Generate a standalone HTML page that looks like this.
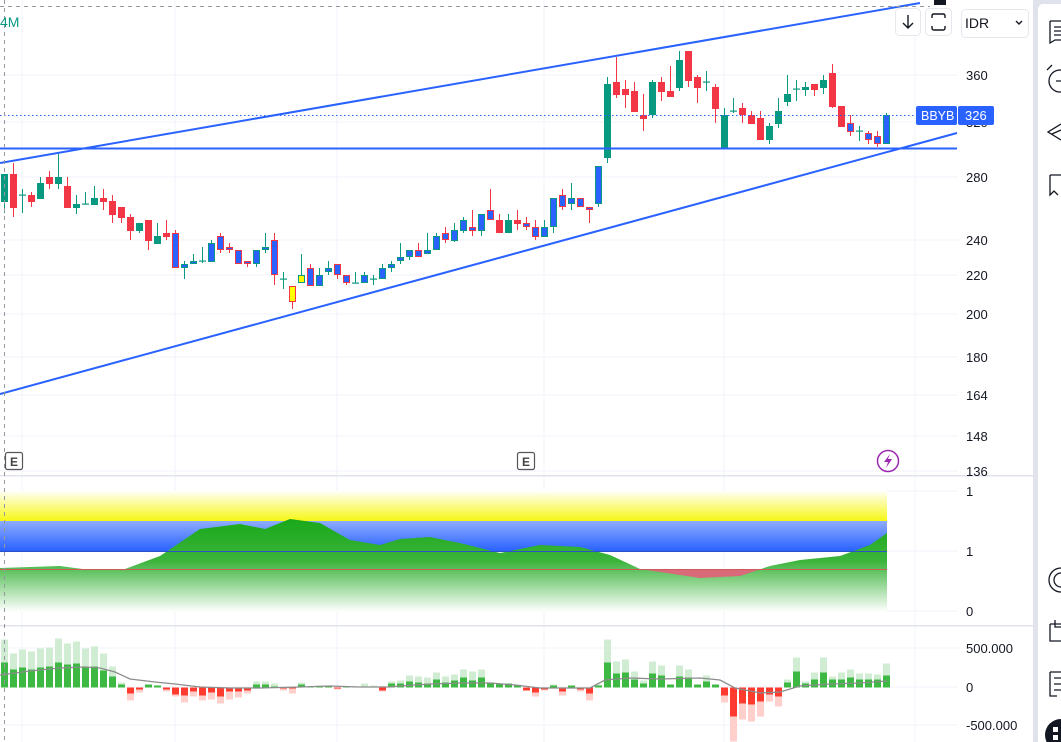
<!DOCTYPE html>
<html><head><meta charset="utf-8"><style>
html,body{margin:0;padding:0;width:1061px;height:742px;overflow:hidden;background:#fff;font-family:"Liberation Sans",sans-serif}
svg{position:absolute;left:0;top:0}
.t{font-size:13px;fill:#131722;font-family:"Liberation Sans",sans-serif}
</style></head><body>
<svg id="s" width="1061" height="742" viewBox="0 0 1061 742" xmlns="http://www.w3.org/2000/svg">
<defs>
<linearGradient id="yl" x1="0" y1="490" x2="0" y2="521" gradientUnits="userSpaceOnUse"><stop offset="0" stop-color="#fff"/><stop offset="1" stop-color="#f7f714"/></linearGradient>
<linearGradient id="bl" x1="0" y1="521" x2="0" y2="551" gradientUnits="userSpaceOnUse"><stop offset="0" stop-color="#8eacff"/><stop offset="1" stop-color="#2962ff"/></linearGradient>
<linearGradient id="gr" x1="0" y1="520" x2="0" y2="612" gradientUnits="userSpaceOnUse"><stop offset="0" stop-color="#1aa81a"/><stop offset="0.45" stop-color="#3cb43c"/><stop offset="1" stop-color="#fff"/></linearGradient>
</defs>
<g id="grid" stroke="#f0f3fa" stroke-width="1"></g>
<g id="c"></g>
</svg>
<script>
var s='';
// grid
[75,122,177,240,275,314,357,395,436,471].forEach(function(y){s+='<line x1="0" x2="958" y1="'+y+'" y2="'+y+'" stroke="#f0f3fa"/>';});
[491,551,611,648,687,725].forEach(function(y){s+='<line x1="0" x2="958" y1="'+y+'" y2="'+y+'" stroke="#f0f3fa"/>';});
[22,175,337,544,724,915].forEach(function(x){s+='<line x1="'+x+'" x2="'+x+'" y1="0" y2="742" stroke="#f0f3fa"/>';});
// panes separators
s+='<rect x="0" y="475" width="1033" height="1.5" fill="#e0e3eb"/><rect x="0" y="625" width="1033" height="1.5" fill="#e0e3eb"/>';
// indicator
s+='<rect x="0" y="490" width="887" height="31" fill="url(#yl)"/><rect x="0" y="521" width="887" height="30" fill="url(#bl)"/>';
s+='<rect x="640" y="569" width="125" height="12" fill="#d96a7a"/>';
var gp=[[0,568],[60,566],[90,570],[125,569],[160,556],[200,529],[240,524],[265,529],[290,519],[320,523],[350,540],[380,545],[400,539],[430,537],[460,543],[500,553],[540,545],[580,547],[610,555],[640,569],[700,578],[740,576],[770,566],[800,560],[840,556],[870,545],[887,533]];
s+='<polygon fill="url(#gr)" points="'+gp.map(function(p){return p.join(',')}).join(' ')+' 887,612 0,612"/>';
s+='<line x1="0" x2="887" y1="551.5" y2="551.5" stroke="#2e50c8" stroke-width="1"/><line x1="0" x2="887" y1="569.5" y2="569.5" stroke="#d05a5a" stroke-width="1"/>';
// volume
var V=[[48,25],[34,18],[38,20],[36,18],[39,20],[40,21],[49,25],[44,23],[46,24],[39,20],[41,21],[34,17],[21,11],[5,3],[-13,-6],[-5,-2],[3,3],[2,2],[-4,-2],[-9,-7],[-15,-8],[-9,-4],[-13,-8],[-12,-5],[-16,-9],[-12,-4],[-10,-4],[-6,-3],[6,3],[6,3],[4,1],[-3,-1],[-6,-1],[5,3],[1,1],[2,1],[1,1],[-2,-1],[1,1],[1,1],[4,1],[2,1],[-4,-3],[6,4],[7,4],[12,6],[11,5],[10,4],[15,8],[11,5],[13,7],[18,10],[16,7],[18,10],[5,5],[4,4],[4,4],[3,2],[-3,-3],[-9,-5],[-3,-2],[3,2],[-8,-4],[2,2],[-4,-2],[-13,-6],[3,2],[48,25],[26,14],[28,15],[16,8],[7,4],[26,14],[22,12],[3,3],[22,11],[18,10],[3,3],[12,6],[3,3],[-15,-8],[-54,-29],[-32,-16],[-34,-17],[-29,-14],[-14,-7],[-19,-9],[8,5],[30,16],[6,4],[15,8],[30,15],[11,8],[15,8],[18,10],[14,8],[14,8],[13,8],[24,12]];
V.forEach(function(v,i){var x=4.5+9*i-3.5;var z=687.5;
 if(v[0]>=0){s+='<rect x="'+x+'" y="'+(z-v[0])+'" width="7" height="'+v[0]+'" fill="#d0ecd2"/><rect x="'+x+'" y="'+(z-v[1])+'" width="7" height="'+v[1]+'" fill="#3db843"/>';}
 else{s+='<rect x="'+x+'" y="'+z+'" width="7" height="'+(-v[0])+'" fill="#ffcfcc"/><rect x="'+x+'" y="'+z+'" width="7" height="'+(-v[1])+'" fill="#ff3b2f"/>';}
});
var ma=[[0,675],[30,671],[60,668],[85,667],[100,668],[115,672],[130,679],[155,682],[175,684],[200,687],[230,688],[260,688],[300,687],[330,686],[360,687],[390,687],[400,686],[430,684],[460,683],[490,683],[515,685],[540,688],[555,688],[590,688],[605,680],[630,678],[660,679],[700,678],[720,680],[735,688],[760,693],[780,692],[800,686],[830,684],[860,683],[887,681]];
s+='<polyline fill="none" stroke="#8c8c8c" stroke-width="1.3" points="'+ma.map(function(p){return p.join(',')}).join(' ')+'"/>';
// candles
var C=[['g',174,202,174,213],['r',174,208,163,217],['g',195,195,189,213],['r',195,202,192,207],['g',183,199,177,199],['r',177,184,171,189],['g',177,184,154,189],['r',186,208,177,208],['g',204,208,195,214],['g',204,204,192,204],['g',198,205,186,205],['r',198,202,189,210],['r',201,215,195,223],['r',207,218,207,223],['r',217,231,214,240],['g',223,231,223,233],['r',220,241,220,250],['g',236,244,223,244],['r',233,237,220,240],['br',233,268,230,268],['bg',264,268,261,279],['bg',261,264,254,264],['g',261,261,247,263],['bg',243,262,240,262],['br',236,250,233,253],['br',247,250,243,253],['br',250,264,250,264],['br',261,264,261,267],['bg',250,264,250,267],['bg',247,250,233,253],['br',240,275,233,285],['g',279,279,272,289],['yr',286,302,286,309],['yg',275,283,254,283],['br',268,286,264,286],['bg',275,286,268,286],['bg',268,272,261,275],['br',264,275,264,279],['br',275,283,275,285],['g',283,283,272,283],['bg',275,283,272,283],['g',279,279,275,285],['bg',268,279,264,279],['bg',264,268,261,272],['bg',257,261,243,264],['bg',250,257,250,260],['br',250,257,243,257],['bg',250,254,233,254],['bg',236,250,233,250],['br',233,240,227,243],['bg',230,241,223,242],['bg',220,231,217,233],['br',227,231,210,236],['bg',214,231,214,236],['br',210,220,189,220],['r',220,233,214,233],['g',220,233,214,233],['r',220,224,210,230],['br',223,227,217,230],['br',227,237,220,240],['bg',227,237,220,237],['bg',198,227,198,233],['br',195,207,189,210],['bg',198,204,183,210],['br',198,207,198,207],['br',207,210,207,223],['bg',166,204,166,207],['g',84,158,77,163],['r',82,95,57,98],['r',89,95,80,108],['r',91,112,82,112],['r',115,119,94,131],['g',82,115,80,118],['r',82,92,77,101],['r',91,97,66,97],['g',60,88,51,91],['r',51,81,51,87],['r',77,88,75,103],['g',82,82,71,91],['r',87,109,84,123],['g',115,149,108,149],['g',111,111,98,113],['r',108,115,103,123],['r',115,124,111,124],['r',118,140,111,140],['g',126,140,123,144],['g',111,124,98,128],['g',94,102,75,106],['g',89,89,80,101],['g',87,90,82,96],['r',84,90,84,96],['g',80,88,75,94],['r',73,107,64,108],['r',106,127,106,127],['br',123,132,115,136],['g',131,131,126,141],['br',133,140,131,144],['br',136,144,131,147],['bg',115,144,113,144]];
var G='#089981',R='#f23645',B='#2962ff',Y='#ffff00';
C.forEach(function(c,i){var x=4.5+9*i;var t=c[0];var oc=(t=='r'||t=='br'||t=='yr')?R:G;var fc=t=='g'?G:t=='r'?R:(t[0]=='b'?B:Y);
 s+='<rect x="'+(x-0.5)+'" y="'+c[3]+'" width="1" height="'+(c[4]-c[3])+'" fill="'+oc+'"/>';
 if(c[2]-c[1]<1){s+='<rect x="'+(x-3.5)+'" y="'+(c[1]-0.5)+'" width="7" height="1.2" fill="'+oc+'"/>';}
 else if(t.length==2){s+='<rect x="'+(x-3)+'" y="'+(c[1]+0.5)+'" width="6" height="'+(c[2]-c[1]-1)+'" fill="'+fc+'" stroke="'+oc+'" stroke-width="1"/>';}
 else{s+='<rect x="'+(x-3.5)+'" y="'+c[1]+'" width="7" height="'+(c[2]-c[1])+'" fill="'+fc+'"/>';}
});
// lines
s+='<line x1="0" y1="115.5" x2="915" y2="115.5" stroke="#2962ff" stroke-width="1" stroke-dasharray="1.5,2.5"/>';
s+='<line x1="0" y1="163" x2="920" y2="3" stroke="#2962ff" stroke-width="2"/>';
s+='<line x1="0" y1="394" x2="957" y2="133" stroke="#2962ff" stroke-width="2"/>';
s+='<line x1="0" y1="148.5" x2="957" y2="148.5" stroke="#2962ff" stroke-width="2"/>';
s+='<line x1="4.5" y1="0" x2="4.5" y2="742" stroke="#9598a1" stroke-width="1" stroke-dasharray="4,4"/>';
s+='<line x1="0" y1="6.5" x2="930" y2="6.5" stroke="#9598a1" stroke-width="1" stroke-dasharray="4,4"/>';
// price axis labels
[[75,'360'],[122,'320'],[177,'280'],[240,'240'],[275,'220'],[314,'200'],[357,'180'],[395,'164'],[436,'148'],[471,'136'],[491,'1'],[551,'1'],[611,'0'],[648,'500.000'],[687,'0'],[725,'-500.000']].forEach(function(a){s+='<text class="t" x="966" y="'+(a[0]+5)+'">'+a[1]+'</text>';});
// BBYB label
s+='<rect x="916" y="106" width="41" height="19" rx="2" fill="#2962ff"/><rect x="958" y="106" width="36" height="19" rx="2" fill="#2962ff"/>';
s+='<text x="921" y="120" style="font-size:12.5px;fill:#fff;font-family:Liberation Sans">BBYB</text><text x="965" y="120" style="font-size:13px;fill:#fff;font-family:Liberation Sans">326</text>';
// E markers
[[5],[517]].forEach(function(a){s+='<rect x="'+(a[0]+0.5)+'" y="452.5" width="17" height="17" rx="2" fill="#fff" stroke="#555" stroke-width="1.2"/><text x="'+(a[0]+5)+'" y="466" style="font-size:12px;font-weight:bold;fill:#444;font-family:Liberation Sans">E</text>';});
// lightning
s+='<circle cx="888" cy="461" r="10.5" fill="#fff" stroke="#9c27b0" stroke-width="1.5"/><path d="M890 454 L884 462 L888 462 L886 468 L892 459 L888 459 Z" fill="#9c27b0"/>';
// 4M
s+='<text x="0" y="27" style="font-size:14px;fill:#089981;font-family:Liberation Sans">4M</text>';
// top buttons
s+='<rect x="895.5" y="8.5" width="25" height="27" rx="4" fill="#fff" stroke="#e6e8ee"/><path d="M908 15 V28 M903 23 L908 28 L913 23" stroke="#131722" stroke-width="1.4" fill="none"/>';
s+='<rect x="925.5" y="8.5" width="26" height="27" rx="4" fill="#fff" stroke="#e6e8ee"/><path d="M932 18 V16 Q932 14 934 14 H943 Q945 14 945 16 V18 M932 26 V28 Q932 30 934 30 H943 Q945 30 945 28 V26" stroke="#131722" stroke-width="1.4" fill="none"/>';
s+='<rect x="934" y="0" width="12" height="5" fill="#131722"/>';
s+='<rect x="961.5" y="9.5" width="67" height="28" rx="4" fill="#fff" stroke="#e6e8ee"/><text x="965" y="28" style="font-size:14px;fill:#131722;font-family:Liberation Sans">IDR</text><path d="M1016 21 L1019 24 L1022 21" stroke="#131722" stroke-width="1.4" fill="none"/>';
// right toolbar
s+='<rect x="1033" y="0" width="28" height="742" fill="#e0e3eb"/><rect x="1038" y="4" width="30" height="742" rx="5" fill="#fff"/>';
s+='<g stroke="#131722" stroke-width="1.3" fill="none">';
s+='<path d="M1050 21 H1061 M1050 21 V43 L1055 40 H1061 M1054 27 H1061 M1054 31 H1061 M1054 35 H1061"/>';
s+='<circle cx="1060" cy="81" r="11"/><path d="M1056 81 H1061 M1047 70 L1052 65"/>';
s+='<path d="M1061 124 L1048 132 L1061 140 M1061 130 L1052 134"/>';
s+='<path d="M1050 175 V195 L1054 191 L1058 195 M1050 175 H1061"/>';
s+='<circle cx="1061" cy="580" r="12"/><circle cx="1061" cy="580" r="7"/>';
s+='<path d="M1050 624 H1061 M1050 624 V641 H1061 M1055 620 V627 H1061"/>';
s+='<path d="M1050 672 H1061 M1050 672 V696 H1057 M1054 678 H1061 M1054 684 H1061 M1054 690 H1061"/>';
s+='</g><circle cx="1061" cy="735" r="16" fill="#131722"/><rect x="1053" y="727" width="5" height="5" fill="#fff"/><rect x="1053" y="735" width="5" height="5" fill="#fff"/>';
document.getElementById('c').innerHTML=s;
</script>
</body></html>
